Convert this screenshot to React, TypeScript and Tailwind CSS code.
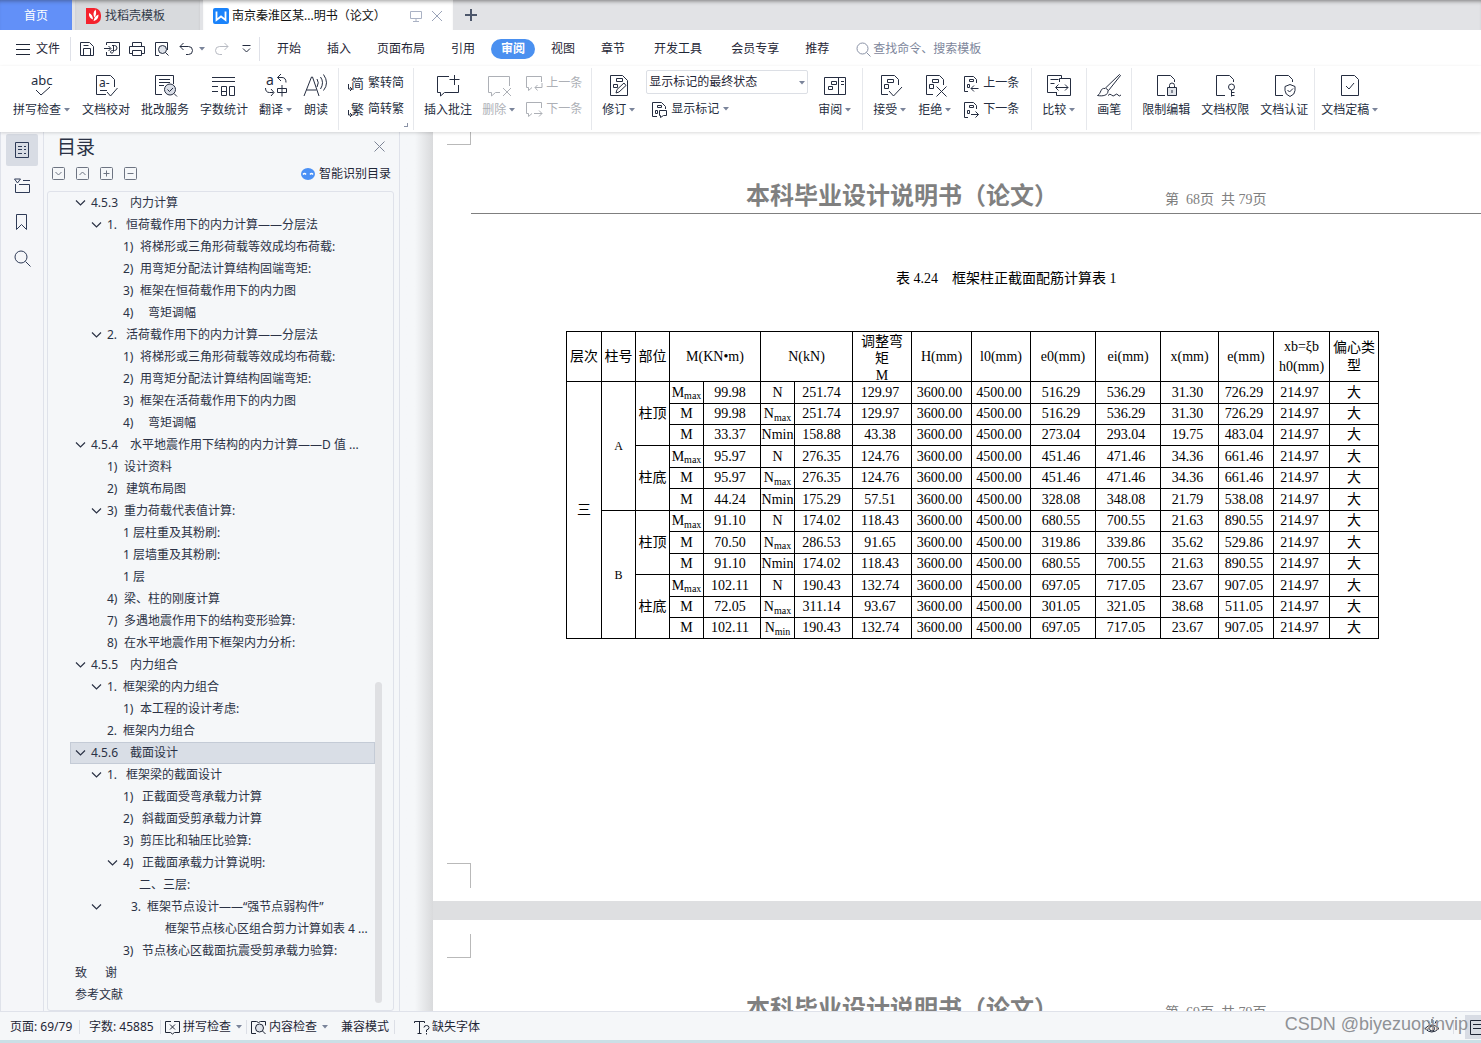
import React from 'react';

const ui = "font-['Noto_Sans','Noto_Sans_CJK_SC',sans-serif]";
const serif = "font-['Liberation_Serif','Noto_Sans_CJK_SC',serif]";

function Glyph({ w = 24, h = 24, children, className = '' }: { w?: number; h?: number; children: React.ReactNode; className?: string }) {
  return (
    <svg width={w} height={h} viewBox={`0 0 ${w} ${h}`} fill="none" stroke="currentColor" className={`shrink-0 overflow-visible ${className}`} aria-hidden="true">
      {children}
    </svg>
  );
}

function Caret({ className = '' }: { className?: string }) {
  return (
    <svg width="6" height="4" viewBox="0 0 6 4" className={`shrink-0 fill-[#7a849a] ${className}`} aria-hidden="true">
      <path d="M0 0h6L3 3.6z" />
    </svg>
  );
}

/* ---------- title bar ---------- */

function TitleBar() {
  return (
    <header className="flex h-[30px] shrink-0 bg-[#e2e3e6] shadow-[inset_0_4px_4px_-3px_#777]">
      <button className="w-[72px] bg-[#6290f8] pt-px text-white shadow-[inset_0_4px_4px_-3px_#47609b]">首页</button>
      <button className="ml-[3px] flex w-[125px] items-center gap-1 bg-[#d8dadd] pl-[11px] pt-px text-[#333b4a] shadow-[inset_0_4px_4px_-3px_#777]">
        <Glyph w={15} h={16}>
          <path d="M0 0h8a7 7 0 0 1 7 7v2a7 7 0 0 1-7 7H0z" fill="#f5222d" stroke="none" />
          <path d="M9.500 1.500C7 4 7 7 8.500 9.500 10.500 7 10.500 4 9.500 1.500zM3 5c-.5 3 1 5.500 4 6.500C7 8.500 5.500 6 3 5zM12.500 6.500C10 7.500 8 9.500 7.500 13c3-.5 5-2.500 5-6.500z" fill="#fff" stroke="none" />
        </Glyph>
        找稻壳模板
      </button>
      <div className="ml-[3px] flex w-[250px] items-center bg-white pl-[10px] pt-px text-[#111] shadow-[inset_0_4px_4px_-3px_#999]">
        <Glyph w={16} h={16}>
          <rect width="16" height="16" rx="2" fill="#1a83fb" stroke="none" />
          <path d="M3.500 3.500v8.500l4.500-3.500 4.500 3.500V3.500" stroke="#fff" strokeWidth="1.800" />
        </Glyph>
        <span className="ml-[3px] w-[170px] whitespace-nowrap">南京秦淮区某...明书（论文）</span>
        <button aria-label="显示" className="ml-[8px] text-[#aab2c4]">
          <Glyph w={12} h={12}>
            <path d="M.5 1.500h11v7H.5zM6 8.500v3M3 11.500h6" />
          </Glyph>
        </button>
        <button aria-label="关闭标签" className="ml-[9px] text-[#9aa3b8]">
          <Glyph w={12} h={12}>
            <path d="M1 1l10 10M11 1L1 11" />
          </Glyph>
        </button>
      </div>
      <button aria-label="新建标签" className="ml-[12px] text-[#4d576b]">
        <Glyph w={12} h={12}>
          <path d="M6 0v12M0 6h12" strokeWidth="2" />
        </Glyph>
      </button>
    </header>
  );
}

/* ---------- menu bar ---------- */

function MenuTab({ label, wide }: { label: string; wide?: boolean }) {
  if (label === '审阅') {
    return <button className="mx-[3px] h-5 w-[44px] rounded-full bg-[#4a90f0] font-bold text-white">{label}</button>;
  }
  return <button className={wide ? 'px-4' : 'px-[13px]'}>{label}</button>;
}

function MenuBar() {
  const tabs = ['开始', '插入', '页面布局', '引用', '审阅', '视图', '章节', '开发工具', '会员专享', '推荐'];
  return (
    <nav className="flex h-9 shrink-0 items-center whitespace-nowrap bg-white pt-[2px] text-[#1f2636]">
      <button className="ml-4 flex items-center gap-[6px]">
        <Glyph w={14} h={11}>
          <path d="M0 .5h14M0 5.500h14M0 10.500h14" />
        </Glyph>
        文件
      </button>
      <div className="ml-[10px] h-6 w-px bg-[#dfe1e8]" />
      <div className="flex items-center gap-[9px] pl-2 text-[#252d40]">
        <button aria-label="保存">
          <Glyph w={16} h={16}>
            <path d="M1.500 1.500h9l4 4v9h-13zM4.500 14.500v-7h7v7M4.500 4.500h5" />
          </Glyph>
        </button>
        <button aria-label="输出为PDF">
          <Glyph w={16} h={16}>
            <path d="M2.500 4V1.500h13v13h-13V11M0 7.500h6.500M4.500 5l2.500 2.500L4.500 10M8 4.500h2.500a2.500 2.500 0 0 1 0 5H8.500c-1.500 0-2 .8-2 1.500 0 1.500 2.500 1.500 3-.5V5" />
          </Glyph>
        </button>
        <button aria-label="打印">
          <Glyph w={16} h={16}>
            <path d="M3.500 5.500v-4h9v4M3.500 12.500h-3v-7h15v7h-3M3.500 9.500h9v5h-9z" />
          </Glyph>
        </button>
        <button aria-label="打印预览">
          <Glyph w={16} h={16}>
            <path d="M5 14.500H1.500v-13h12V9" />
            <circle cx="8.500" cy="8.500" r="4" fill="#dfe3ea" />
            <path d="M11.500 11.500l3 3" />
          </Glyph>
        </button>
        <button aria-label="撤销" className="flex items-center gap-[5px]">
          <Glyph w={15} h={14}>
            <path d="M4.500 1L1 4.500 4.500 8M1 4.500h8.500a4 4 0 0 1 0 8H7" />
          </Glyph>
          <Caret />
        </button>
        <button aria-label="恢复" className="text-[#b7bac2]">
          <Glyph w={15} h={14}>
            <path d="M10.500 1L14 4.500 10.500 8M14 4.500H5.500a4 4 0 0 0 0 8H8" />
          </Glyph>
        </button>
        <button aria-label="自定义快速访问工具栏" className="ml-1">
          <Glyph w={9} h={8}>
            <path d="M.5 .5h8M1 3.500L4.500 7 8 3.500" />
          </Glyph>
        </button>
      </div>
      <div className="ml-2 mr-1 h-6 w-px bg-[#dfe1e8]" />
      {tabs.map((t) => (
        <MenuTab key={t} label={t} wide={t === '开发工具'} />
      ))}
      <label className="ml-[14px] flex flex-1 items-center gap-[2px] text-[#8a92a6]">
        <Glyph w={15} h={15}>
          <circle cx="6.500" cy="6.500" r="5.500" />
          <path d="M10.500 10.500l4 4" />
        </Glyph>
        <input aria-label="查找命令、搜索模板" placeholder="查找命令、搜索模板" className="w-40 bg-transparent outline-none placeholder:text-[#7d869b]" />
      </label>
    </nav>
  );
}

/* ---------- ribbon ---------- */

function Group({ children, className = 'gap-[10px] px-[10px]' }: { children: React.ReactNode; className?: string }) {
  return <div className={`flex h-[62px] shrink-0 border-r border-[#e6e8ec] ${className}`}>{children}</div>;
}

function Big({ label, caret, muted, children }: { label: string; caret?: boolean; muted?: boolean; children: React.ReactNode }) {
  return (
    <button className={`flex h-[51px] flex-col items-center gap-1 pt-[5px] ${muted ? 'text-[#adb0b6]' : 'text-[#252d40]'}`}>
      <Glyph w={24} h={24}>{children}</Glyph>
      <span className="flex items-center leading-[18px]">
        {label}
        {caret && <Caret className="ml-[3px] mr-px" />}
      </span>
    </button>
  );
}

function Small({ label, caret, muted, children }: { label: string; caret?: boolean; muted?: boolean; children: React.ReactNode }) {
  return (
    <button className={`flex h-[26px] items-center gap-1 ${muted ? 'text-[#adb0b6]' : 'text-[#252d40]'}`}>
      <Glyph w={16} h={17}>{children}</Glyph>
      {label}
      {caret && <Caret />}
    </button>
  );
}

const pageOutline = 'M10 21.500H3.500v-19h13l4 4V12';
const markBoxes = 'M9.500 6.500h6v3h-6zM6.500 11.500h4v4h-4z';

function Ribbon() {
  return (
    <section className="z-10 flex h-[66px] shrink-0 whitespace-nowrap bg-white pt-[2px] text-[#1f2636] shadow-[0_1px_3px_rgba(0,0,0,0.15)]">
      <Group className="gap-[11px] pl-[13px] pr-[10px]">
        <Big label="拼写检查" caret>
          <text x="1" y="12" fill="currentColor" stroke="none" fontSize="13" fontFamily="Noto Sans">abc</text>
          <path d="M6 17l5 5 9-8" />
        </Big>
        <Big label="文档校对">
          <path d="M12 21.500H2.500v-19h14l4 4V14M6 17.500h7M13 19l3.500 4 7-8" />
          <text x="5" y="14" fill="currentColor" stroke="none" fontSize="12" fontFamily="Noto Sans">a-</text>
        </Big>
        <Big label="批改服务">
          <path d="M9 21.500H2.500v-19h18V11M6 6.500h11M6 9.500h11M6 12.500h5" />
          <circle cx="17" cy="16.500" r="5.500" fill="#d9dde6" />
          <path d="M14.500 16.500l2 2 3.500-3.500M21 20.500l3 3" />
        </Big>
        <Big label="字数统计">
          <path d="M0 4.500h23M0 8.500h23M0 13.500h6M0 18.500h6M9.500 13.500h5v9h-5zM9.500 18.500h5M17.500 13.500h5v9h-5z" />
        </Big>
        <Big label="翻译" caret>
          <text x="2" y="12" fill="currentColor" stroke="none" fontSize="14" fontFamily="Noto Sans">a</text>
          <path d="M17 1l-3.500 3.500L17 8M13.500 4.500H18q4 0 4 5M1.500 15q0 4.500 4 4.500h4M7 16l3 3.500L7 23M13.500 15.500h9v4h-9zM18 12v11.500" />
        </Big>
        <Big label="朗读">
          <path d="M0 23L7.500 4h1L15 23M2.500 17h10M13 6q2.500 3.500 0 8M16.500 4q4 5.500 0 12M19.500 1.500q6 8.500 0 16" />
        </Big>
      </Group>
      <Group className="relative px-[9px]">
        <div className="flex flex-col pt-[2px]">
          <Small label="繁转简">
            <text x="3" y="13" fill="currentColor" stroke="none" fontSize="13" fontFamily="Noto Sans CJK SC">简</text>
            <path d="M.5 9v5h3M2 12l2 2-2 2" />
          </Small>
          <Small label="简转繁">
            <text x="3" y="13" fill="currentColor" stroke="none" fontSize="13" fontFamily="Noto Sans CJK SC">繁</text>
            <path d="M.5 9v5h3M2 12l2 2-2 2" />
          </Small>
        </div>
        <span className="absolute bottom-[3px] right-[5px] h-1 w-1 border-b border-r border-[#8a92a6]" />
      </Group>
      <Group className="gap-[10px] pl-[10px] pr-[9px]">
        <Big label="插入批注">
          <path d="M13 3.500H1.500v16h3V23l4-3.500h14V12M18.500 2v10M13.500 6.500h10" />
        </Big>
        <Big label="删除" caret muted>
          <path d="M13 19.500H8.500L4.500 23v-3.500h-3v-16h21V13M16 15l8 8M24 15l-8 8" />
        </Big>
        <div className="flex flex-col pt-[2px]">
          <Small label="上一条" muted>
            <path d="M6 12.500l-3.500 3v-3h-2v-11h15V7M16 8v4.500H9M11.500 10L9 12.500l2.500 3" />
          </Small>
          <Small label="下一条" muted>
            <path d="M6 12.500l-3.500 3v-3h-2v-11h15V7M8 12.500h8M13 9.500l3 3-3 3" />
          </Small>
        </div>
      </Group>
      <Group>
        <Big label="修订" caret>
          <path d="M3.500 2.500h12l5 5v15h-17zM9.500 5.500h6v3h-6zM6.500 11.500h4v3h-4zM9 20l1-3.500 7-6.500 2 2.500-7 6.500z" />
        </Big>
        <div className="flex flex-col pt-[2px]">
          <div className="relative">
            <select aria-label="显示状态" className="block h-6 w-[162px] appearance-none rounded-[2px] border border-[#dcdfe5] bg-white px-[2px] text-[#1f2636]">
              <option>显示标记的最终状态</option>
            </select>
            <Caret className="pointer-events-none absolute right-[3px] top-[11px]" />
          </div>
          <span className="pl-[5px] pt-[2px]">
            <Small label="显示标记" caret>
              <path d="M6 15.500H1.500v-14h9l4 4V8M6.500 4.500h4v2h-4zM4.500 9.500h2v3h-2zM8.500 9.500h7v5h-3l-3 2v-2h-1z" />
            </Small>
          </span>
        </div>
        <Big label="审阅" caret>
          <path d="M1.500 4.500h21v17h-21zM15.500 4.500v17M8.500 8.500h5v3h-5zM5.500 13.500h4v3h-4zM18 8.500h3M18 11.500h3" />
        </Big>
      </Group>
      <Group className="gap-[11px] px-[10px]">
        <Big label="接受" caret>
          <path d={pageOutline} />
          <path d={markBoxes} />
          <path d="M11 18l4.500 5L24 14" />
        </Big>
        <Big label="拒绝" caret>
          <path d={pageOutline} />
          <path d={markBoxes} />
          <path d="M13.500 13.500l10 10M23.500 13.500l-10 10" />
        </Big>
        <div className="flex flex-col pr-[2px] pt-[2px]">
          <Small label="上一条">
            <path d="M5 16.500H1.500v-15h9l3 3V8M6.500 4.500h4v2h-4zM4.500 9.500h2v3h-2zM15.500 13.500H8M11 10.500l-3 3 3 3" />
          </Small>
          <Small label="下一条">
            <path d="M5 16.500H1.500v-15h9l3 3V8M6.500 4.500h4v2h-4zM4.500 9.500h2v3h-2zM8 13.500h7.500M12.500 10.500l3 3-3 3" />
          </Small>
        </div>
      </Group>
      <Group>
        <Big label="比较" caret>
          <path d="M9 19.500H.500v-17h14v3M3.500 6.500h8M3.500 10.500h4M12.500 9V5.500h11v17h-14V19M9 14.500h12M11.500 11.500L8.500 14.500l3 3M18 11.500l3 3-3 3" />
        </Big>
      </Group>
      <Group>
        <Big label="画笔">
          <path d="M22.500 1.500L8.500 15l3 2.500L23.500 2.500zM8 15.500c-5-1-3.500 5-7.500 7 5 1 11 0 10.500-5M11 22.500q2-2.500 3.500-.5t3.500 0 3 0 3 0" />
        </Big>
      </Group>
      <Group className="gap-[11px] pl-[10px] pr-[6px]">
        <Big label="限制编辑">
          <path d="M11 22.500H3.500v-20h13l4 4V9" />
          <path d="M13.500 14.500h9v8h-9z" fill="#e2e5ea" />
          <path d="M15.500 14.500v-2a2.500 2.500 0 0 1 5 0v2M18 17v3" />
        </Big>
        <Big label="文档权限">
          <path d="M12 22.500H3.500v-20h13l4 4V9" />
          <circle cx="18.500" cy="14" r="3" />
          <path d="M18.500 17v6.500M18.500 19.500h3M18.500 22.500h3" />
        </Big>
        <Big label="文档认证">
          <path d="M11 22.500H3.500v-20h13l4 4V9M18 11.500l5 2v4q0 4-5 6-5-2-5-6v-4zM15.500 17l2 2 3.500-3.500" />
        </Big>
      </Group>
      <div className="flex h-[62px] pl-[6px]">
        <Big label="文档定稿" caret>
          <path d="M3.500 2.500h13l4 4v16h-17zM8 13l3 3 5-6" />
        </Big>
      </div>
    </section>
  );
}

/* ---------- outline panel ---------- */

const markWidth = { a: 'w-[39px]', b: 'w-[19px]', c: 'w-[17px]', d: 'w-[25px]', e: 'w-4' };

type Item = { level: number; mark?: string; gap?: keyof typeof markWidth; text: string; open?: boolean; shift?: string; selected?: boolean };

const outline: Item[] = [
  { level: 2, mark: '4.5.3', gap: 'a', text: '内力计算', open: true },
  { level: 3, mark: '1.', gap: 'b', text: '恒荷载作用下的内力计算——分层法', open: true },
  { level: 4, mark: '1)', gap: 'c', text: '将梯形或三角形荷载等效成均布荷载:' },
  { level: 4, mark: '2)', gap: 'c', text: '用弯矩分配法计算结构固端弯矩:' },
  { level: 4, mark: '3)', gap: 'c', text: '框架在恒荷载作用下的内力图' },
  { level: 4, mark: '4)', gap: 'd', text: '弯矩调幅' },
  { level: 3, mark: '2.', gap: 'b', text: '活荷载作用下的内力计算——分层法', open: true },
  { level: 4, mark: '1)', gap: 'c', text: '将梯形或三角形荷载等效成均布荷载:' },
  { level: 4, mark: '2)', gap: 'c', text: '用弯矩分配法计算结构固端弯矩:' },
  { level: 4, mark: '3)', gap: 'c', text: '框架在活荷载作用下的内力图' },
  { level: 4, mark: '4)', gap: 'd', text: '弯矩调幅' },
  { level: 2, mark: '4.5.4', gap: 'a', text: '水平地震作用下结构的内力计算——D 值 ...', open: true },
  { level: 3, mark: '1)', gap: 'c', text: '设计资料' },
  { level: 3, mark: '2)', gap: 'b', text: '建筑布局图' },
  { level: 3, mark: '3)', gap: 'c', text: '重力荷载代表值计算:', open: true },
  { level: 4, text: '1 层柱重及其粉刷:' },
  { level: 4, text: '1 层墙重及其粉刷:' },
  { level: 4, text: '1 层' },
  { level: 3, mark: '4)', gap: 'c', text: '梁、柱的刚度计算' },
  { level: 3, mark: '7)', gap: 'c', text: '多遇地震作用下的结构变形验算:' },
  { level: 3, mark: '8)', gap: 'c', text: '在水平地震作用下框架内力分析:' },
  { level: 2, mark: '4.5.5', gap: 'a', text: '内力组合', open: true },
  { level: 3, mark: '1.', gap: 'e', text: '框架梁的内力组合', open: true },
  { level: 4, mark: '1)', gap: 'c', text: '本工程的设计考虑:' },
  { level: 3, mark: '2.', gap: 'e', text: '框架内力组合' },
  { level: 2, mark: '4.5.6', gap: 'a', text: '截面设计', open: true, selected: true },
  { level: 3, mark: '1.', gap: 'b', text: '框架梁的截面设计', open: true },
  { level: 4, mark: '1)', gap: 'b', text: '正截面受弯承载力计算' },
  { level: 4, mark: '2)', gap: 'b', text: '斜截面受剪承载力计算' },
  { level: 4, mark: '3)', gap: 'c', text: '剪压比和轴压比验算:' },
  { level: 4, mark: '4)', gap: 'b', text: '正截面承载力计算说明:', open: true },
  { level: 5, text: '二、三层:' },
  { level: 3, mark: '3.', gap: 'e', text: '框架节点设计——“强节点弱构件”', open: true, shift: 'ml-6' },
  { level: 4, text: '框架节点核心区组合剪力计算如表 4 ...', shift: 'ml-[42px]' },
  { level: 4, mark: '3)', gap: 'b', text: '节点核心区截面抗震受剪承载力验算:' },
  { level: 1, mark: '致', gap: 'a', text: '谢' },
  { level: 1, text: '参考文献' },
];

const levelPad: Record<number, string> = {
  1: 'pl-[5px]',
  2: 'pl-[5px]',
  3: 'pl-[21px]',
  4: 'pl-[37px]',
  5: 'pl-[53px]',
};

function OutlineRow({ item }: { item: Item }) {
  return (
    <li className={`flex h-[22px] items-center ${levelPad[item.level]} ${item.selected ? 'bg-[#d9dee6] outline outline-1 -outline-offset-1 outline-[#c4cbd6]' : ''}`}>
      {item.level > 1 && (
        <span className="flex w-4 shrink-0">
          {item.open && (
            <button aria-label="折叠">
              <Glyph w={11} h={8}>
                <path d="M1 1.500L5.500 6 10 1.500" strokeWidth="1.200" />
              </Glyph>
            </button>
          )}
        </span>
      )}
      <a href="#" className={`flex min-w-0 ${item.shift ?? ''}`}>
        {item.mark && <span className={`shrink-0 ${item.level === 1 ? 'w-[30px]' : markWidth[item.gap ?? 'c']}`}>{item.mark}</span>}
        <span>{item.text}</span>
      </a>
    </li>
  );
}

function ToolBox({ label, d }: { label: string; d: string }) {
  return (
    <button aria-label={label}>
      <Glyph w={13} h={13}>
        <rect x=".5" y=".5" width="12" height="12" rx="1" />
        <path d={d} />
      </Glyph>
    </button>
  );
}

function SideBar() {
  return (
    <>
      <aside className="flex w-[44px] shrink-0 flex-col items-center gap-1 border-x border-[#dfe2ea] bg-[#f5f6f9] pt-[2px] text-[#2f3b57]">
        <button aria-label="目录" className="grid size-8 place-items-center rounded-[2px] bg-[#d8dce4]">
          <Glyph w={16} h={18}>
            <path d="M1.500 1.500h13v15h-13zM4 5.500h4M10 5.500h2M4 8.500h4M10 8.500h2M4 12.500h4M10 12.500h2" />
          </Glyph>
        </button>
        <button aria-label="章节" className="grid size-8 place-items-center">
          <Glyph w={17} h={16}>
            <path d="M.5 1h6l-3 4zM9 2.500h7M1.500 6v8.500h14v-8H5" />
          </Glyph>
        </button>
        <button aria-label="书签" className="grid size-8 place-items-center">
          <Glyph w={12} h={17}>
            <path d="M.5 .5h10v15l-5-5-5 5z" />
          </Glyph>
        </button>
        <button aria-label="查找" className="grid size-8 place-items-center">
          <Glyph w={17} h={17}>
            <circle cx="7" cy="7" r="6" />
            <path d="M11.500 11.500l5 5" />
          </Glyph>
        </button>
      </aside>
      <section className="flex w-[356px] shrink-0 flex-col border-r border-[#dfe2ea] bg-[#f5f7f9] pl-[3px] pr-[5px] text-[#2b3245]">
        <div className="flex h-[29px] items-center justify-between pl-[10px] pr-[9px]">
          <h2 className="text-[19px]">目录</h2>
          <button aria-label="关闭" className="text-[#7d8596]">
            <Glyph w={11} h={11}>
              <path d="M.5 .5l10 10M10.500 .5l-10 10" />
            </Glyph>
          </button>
        </div>
        <div className="mb-[6px] flex h-6 items-center gap-[11px] pl-[5px] pr-[3px] text-[#6d7482]">
          <ToolBox label="展开" d="M3.500 5l3 3 3-3" />
          <ToolBox label="收起" d="M3.500 8l3-3 3 3" />
          <ToolBox label="增加" d="M3.500 6.500h6M6.500 3.500v6" />
          <ToolBox label="减少" d="M3.500 6.500h6" />
          <button className="ml-auto flex items-center gap-1 pt-[2px] text-[#1f2636]">
            <Glyph w={14} h={12}>
              <ellipse cx="7" cy="6" rx="7" ry="6" fill="#4a90f5" stroke="none" />
              <path d="M2 6.500q1.500-2 3 0M9 6.500q1.500-2 3 0" stroke="#fff" strokeWidth="1.500" />
            </Glyph>
            智能识别目录
          </button>
        </div>
        <div className="flex min-h-0 flex-1 overflow-hidden rounded-[3px] border border-[#dfe2ea] pl-[22px]">
          <ul className="min-w-0 flex-1 whitespace-nowrap">
            {outline.map((item, i) => (
              <OutlineRow key={i} item={item} />
            ))}
          </ul>
          <div className="flex w-[18px] shrink-0 flex-col justify-end pb-[7px]">
            <div className="h-[321px] w-[7px] rounded-full bg-[#dfe0e3]" />
          </div>
        </div>
      </section>
    </>
  );
}

/* ---------- document ---------- */

const cols = [
  'w-[35px]', 'w-[34px]', 'w-[34px]', 'w-[34px]', 'w-[57px]', 'w-[34px]', 'w-[58px]', 'w-[59px]',
  'w-[60px]', 'w-[59px]', 'w-[65px]', 'w-[65px]', 'w-[58px]', 'w-[55px]', 'w-[56px]', 'w-[49px]',
];

const data = [
  ['Mmax', '99.98', 'N', '251.74', '129.97', '516.29', '536.29', '31.30', '726.29'],
  ['M', '99.98', 'Nmax', '251.74', '129.97', '516.29', '536.29', '31.30', '726.29'],
  ['M', '33.37', 'N-min', '158.88', '43.38', '273.04', '293.04', '19.75', '483.04'],
  ['Mmax', '95.97', 'N', '276.35', '124.76', '451.46', '471.46', '34.36', '661.46'],
  ['M', '95.97', 'Nmax', '276.35', '124.76', '451.46', '471.46', '34.36', '661.46'],
  ['M', '44.24', 'N-min', '175.29', '57.51', '328.08', '348.08', '21.79', '538.08'],
  ['Mmax', '91.10', 'N', '174.02', '118.43', '680.55', '700.55', '21.63', '890.55'],
  ['M', '70.50', 'Nmax', '286.53', '91.65', '319.86', '339.86', '35.62', '529.86'],
  ['M', '91.10', 'N-min', '174.02', '118.43', '680.55', '700.55', '21.63', '890.55'],
  ['Mmax', '102.11', 'N', '190.43', '132.74', '697.05', '717.05', '23.67', '907.05'],
  ['M', '72.05', 'Nmax', '311.14', '93.67', '301.05', '321.05', '38.68', '511.05'],
  ['M', '102.11', 'Nmin', '190.43', '132.74', '697.05', '717.05', '23.67', '907.05'],
];

const tallRows = [0, 3, 5, 7, 9];

function Cell({ children, ...rest }: React.TdHTMLAttributes<HTMLTableCellElement>) {
  return (
    <td className="whitespace-nowrap border border-black p-0 text-center" {...rest}>
      {children}
    </td>
  );
}

function Num({ children }: { children: React.ReactNode }) {
  return <td className="whitespace-nowrap border border-black p-0 pr-1 text-center">{children}</td>;
}

function Symbol({ value }: { value: string }) {
  if (value.includes('-')) return <>{value.replace('-', '')}</>;
  if (value.length === 1) return <>{value}</>;
  return (
    <>
      {value[0]}
      <sub className="text-[10px]">{value.slice(1)}</sub>
    </>
  );
}

function Head({ children, span }: { children: React.ReactNode; span?: number }) {
  return (
    <th colSpan={span} className="border border-black p-0 text-center font-normal">
      {children}
    </th>
  );
}

function ReinforcementTable() {
  return (
    <table className="w-[813px] table-fixed border-collapse text-[14px] leading-[18px] text-black">
      <colgroup>
        {cols.map((c, i) => (
          <col key={i} className={c} />
        ))}
      </colgroup>
      <thead>
        <tr className="h-[50px]">
          <Head>层次</Head>
          <Head>柱号</Head>
          <Head>部位</Head>
          <Head span={2}>M(KN•m)</Head>
          <Head span={2}>N(kN)</Head>
          <Head>
            <div className="h-[49px] overflow-hidden px-1 pt-px leading-[17px]">调整弯矩<br />M</div>
          </Head>
          <Head>H(mm)</Head>
          <Head>l0(mm)</Head>
          <Head>e0(mm)</Head>
          <Head>ei(mm)</Head>
          <Head>x(mm)</Head>
          <Head>e(mm)</Head>
          <Head>
            <div className="leading-5">xb=ξb<br />h0(mm)</div>
          </Head>
          <Head>偏心类型</Head>
        </tr>
      </thead>
      <tbody>
        {data.map((r, i) => (
          <tr key={i} className={tallRows.includes(i) ? 'h-[22px]' : 'h-[21px]'}>
            {i === 0 && <Cell rowSpan={12}>三</Cell>}
            {i % 6 === 0 && (
              <Cell rowSpan={6}>
                <span className="text-[12px]">{i === 0 ? 'A' : 'B'}</span>
              </Cell>
            )}
            {i % 3 === 0 && <Cell rowSpan={3}>{i % 6 === 0 ? '柱顶' : '柱底'}</Cell>}
            <Cell><Symbol value={r[0]} /></Cell>
            <Num>{r[1]}</Num>
            <Cell><Symbol value={r[2]} /></Cell>
            <Num>{r[3]}</Num>
            <Num>{r[4]}</Num>
            <Num>3600.00</Num>
            <Num>4500.00</Num>
            <Num>{r[5]}</Num>
            <Num>{r[6]}</Num>
            <Num>{r[7]}</Num>
            <Num>{r[8]}</Num>
            <Num>214.97</Num>
            <Cell>大</Cell>
          </tr>
        ))}
      </tbody>
    </table>
  );
}

function PageHeader({ page, markClass }: { page: number; markClass: string }) {
  return (
    <>
      <div className={`flex items-end pl-[14px] ${markClass}`}>
        <div className="h-6 w-6 border-b border-r border-[#b9b9b9]" />
      </div>
      <div className="ml-[38px] flex h-[69px] items-end whitespace-nowrap border-b border-[#7f7f7f] pl-[275px] text-[#808080]">
        <span className="w-[419px] text-[24px] font-bold leading-[34px]">本科毕业设计说明书（论文）</span>
        <span className="pb-[2px] text-[14px] leading-[22px]">第&nbsp; {page}页&nbsp; 共 79页</span>
      </div>
    </>
  );
}

function DocumentView() {
  return (
    <main className={`flex min-w-0 flex-1 overflow-hidden bg-[#dedfe1] ${serif}`}>
      <div className="w-[33px] shrink-0 bg-linear-to-r from-[#f5f7f9] from-45% to-[#d9dadc]" />
      <div className="flex min-w-0 flex-1 flex-col gap-[19px] overflow-hidden">
        <article className="flex h-[769px] shrink-0 flex-col overflow-hidden bg-white">
          <PageHeader page={68} markClass="h-[13px] overflow-hidden" />
          <p className="mt-[54px] whitespace-pre pl-[463px] text-[14px] leading-[22px] text-black">表 4.24    框架柱正截面配筋计算表 1</p>
          <div className="mt-[41px] pl-[133px]">
            <ReinforcementTable />
          </div>
          <div className="mb-[13px] ml-[14px] mt-auto h-[25px] w-6 border-r border-t border-[#b9b9b9]" />
        </article>
        <article className="min-h-[120px] flex-1 shrink-0 bg-white">
          <PageHeader page={69} markClass="h-[38px]" />
        </article>
      </div>
    </main>
  );
}

/* ---------- status bar ---------- */

function Divider() {
  return <span className="h-[14px] w-px bg-[#dcdfe6]" />;
}

function StatusBar() {
  return (
    <footer className="relative shrink-0">
      <div className="flex h-[29px] items-center whitespace-nowrap border-t border-[#dfe2ea] bg-[#f5f7f9] pl-[10px] pt-[2px] text-[#1f2636]">
        <span className="w-[69px]">页面: 69/79</span>
        <Divider />
        <span className="ml-[9px] w-[71px]">字数: 45885</span>
        <Divider />
        <button className="ml-1 flex w-[81px] items-center gap-[3px]">
          <Glyph w={15} h={14}>
            <path d="M6 1.500H.5v11h5l2 1.500 2-1.500h5v-11H9M5 4.500l5 5M10 4.500l-5 5" />
          </Glyph>
          拼写检查
          <Caret className="ml-[2px]" />
        </button>
        <Divider />
        <button className="ml-1 flex w-[90px] items-center gap-[3px]">
          <Glyph w={15} h={15}>
            <path d="M5 13.500H.5v-12h5l2 1 2-1h5v4" />
            <circle cx="8.500" cy="8" r="4" fill="#dfe3ea" />
            <path d="M11.500 11l3 3" />
          </Glyph>
          内容检查
          <Caret className="ml-[2px]" />
        </button>
        <button className="mr-[5px]">兼容模式</button>
        <Divider />
        <button className="ml-[19px] flex items-center gap-[2px]">
          <Glyph w={16} h={15}>
            <path d="M.5 3V1.500h10V3M5.500 1.500v12M3.500 13.500h4M10 7.500q0-2 2.500-2t2.500 2-2.500 2.500v2M12.500 13v1.500" />
          </Glyph>
          缺失字体
        </button>
        <button aria-label="护眼模式" className="ml-auto">
          <Glyph w={16} h={16}>
            <path d="M1 9.500q6.500-7 14 0-7.500 7-14 0zM8 0v4M3.500 1.500l1.500 3M12.500 1.500L11 4.500" />
            <circle cx="8" cy="9.500" r="2.500" />
          </Glyph>
        </button>
        <span className="ml-[13px] mr-[11px] flex"><Divider /></span>
        <button aria-label="页面视图" className="flex h-6 w-4 items-center overflow-hidden bg-[#d8dce4] pl-[5px]">
          <Glyph w={16} h={15}>
            <path d="M.5 .5h15v14H.5zM3 4.500h10M3 8.500h10" />
          </Glyph>
        </button>
      </div>
      <div className="h-[3px] bg-[#cbdfe6]" />
      <span className="pointer-events-none absolute right-[13px] top-[2px] font-['Liberation_Sans',sans-serif] text-[18px] leading-[22px] text-[#909296]">CSDN @biyezuopinvip</span>
    </footer>
  );
}

export default function App() {
  return (
    <div className={`flex h-screen flex-col overflow-hidden bg-[#f5f7f9] text-[12px] leading-[18px] ${ui}`}>
      <TitleBar />
      <MenuBar />
      <Ribbon />
      <div className="flex min-h-0 flex-1">
        <SideBar />
        <DocumentView />
      </div>
      <StatusBar />
    </div>
  );
}
